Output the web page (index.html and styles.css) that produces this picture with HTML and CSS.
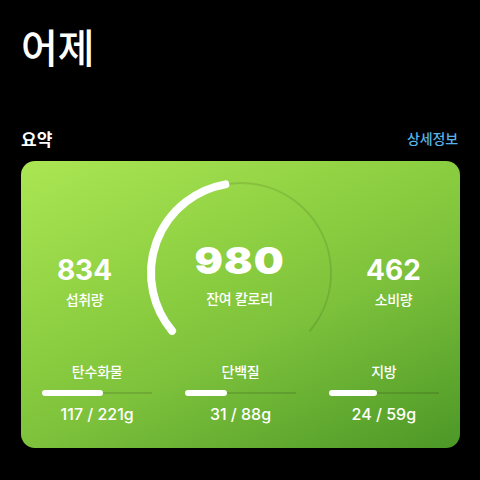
FILE: index.html
```html
<!DOCTYPE html>
<html lang="ko">
<head>
<meta charset="utf-8">
<title>어제</title>
<link rel="stylesheet" href="styles.css">
</head>
<body>
<main class="page">
  <h1 class="title">어제</h1>
  <div class="section-head">
    <span class="section-title">요약</span>
    <a class="more" href="#">상세정보</a>
  </div>
  <section class="card">
    <div class="top">
      <div class="stat">
        <div class="num">834</div>
        <div class="lbl">섭취량</div>
      </div>
      <div class="gauge">
        <svg class="ring" width="200" height="170" viewBox="0 0 200 170">
          <path d="M31.06 157.85 A90 90 0 1 1 168.94 157.85" fill="none" stroke="rgba(0,0,0,0.10)" stroke-width="2" stroke-linecap="round"/>
          <path d="M31.06 157.85 A90 90 0 0 1 84.37 11.37" fill="none" stroke="#ffffff" stroke-width="8" stroke-linecap="round"/>
        </svg>
        <div class="center">
          <div class="big">980</div>
          <div class="lbl lbl-center">잔여 칼로리</div>
        </div>
      </div>
      <div class="stat">
        <div class="num">462</div>
        <div class="lbl">소비량</div>
      </div>
    </div>
    <div class="macros">
      <div class="macro">
        <div class="mlbl">탄수화물</div>
        <div class="bar"><div class="fill" style="width:55%"></div></div>
        <div class="mval">117 / 221g</div>
      </div>
      <div class="macro">
        <div class="mlbl">단백질</div>
        <div class="bar"><div class="fill" style="width:38%"></div></div>
        <div class="mval">31 / 88g</div>
      </div>
      <div class="macro">
        <div class="mlbl">지방</div>
        <div class="bar"><div class="fill" style="width:44%"></div></div>
        <div class="mval">24 / 59g</div>
      </div>
    </div>
  </section>
</main>
</body>
</html>
```
FILE: styles.css
```css
* { box-sizing: border-box; }
html, body {
  margin: 0;
  background: #000;
}
body {
  font-family: Inter, "Noto Sans CJK KR", sans-serif;
  color: #fff;
  width: 480px;
  height: 480px;
  overflow: hidden;
}
.page {
  padding: 22px 20px 0 21px;
}
.title {
  margin: 0;
  font-family: "Noto Sans CJK KR", sans-serif;
  font-size: 40px;
  line-height: 48px;
  font-weight: 500;
}
.section-head {
  margin-top: 56px;
  display: flex;
  justify-content: space-between;
  align-items: center;
  height: 24px;
}
.section-title {
  font-family: "Noto Sans CJK KR", sans-serif;
  font-size: 17px;
  font-weight: 700;
}
.more {
  font-family: "Noto Sans CJK KR", sans-serif;
  font-size: 14px;
  letter-spacing: -0.1px;
  margin-right: 2px;
  color: #58b2e8;
  text-decoration: none;
  font-weight: 500;
}
.card {
  margin-top: 11px;
  width: 439px;
  height: 287px;
  border-radius: 14px;
  background: linear-gradient(155deg, #abe653 0%, #8acd40 42%, #7ec23c 58%, #4c9827 100%);
  padding-top: 12px;
}
.top {
  display: grid;
  grid-template-columns: 113px 200px 1fr;
  padding: 0 14px 0 7px;
  height: 170px;
}
.stat {
  text-align: center;
  padding-top: 80px;
}
.num {
  font-size: 28px;
  line-height: 34px;
  font-weight: 700;
}
.lbl {
  font-family: "Noto Sans CJK KR", sans-serif;
  font-size: 14px;
  letter-spacing: -0.3px;
  line-height: 20px;
  margin-top: 1.5px;
  font-weight: 500;
}
.lbl-center {
  margin-top: 5.5px;
}
.gauge {
  position: relative;
  height: 170px;
}
.ring {
  display: block;
}
.center {
  position: absolute;
  top: 65.5px;
  left: 0;
  right: 3px;
  text-align: center;
}
.big {
  display: inline-block;
  font-size: 37px;
  line-height: 44px;
  font-weight: 900;
  letter-spacing: 1px;
  transform: scaleX(1.14);
}
.macros {
  display: grid;
  grid-template-columns: repeat(3, 1fr);
  column-gap: 33px;
  padding: 18px 21px 0;
}
.macro {
  text-align: center;
}
.mlbl {
  font-family: "Noto Sans CJK KR", sans-serif;
  font-size: 14px;
  letter-spacing: -0.2px;
  line-height: 20px;
  font-weight: 500;
}
.bar {
  margin-top: 9px;
  height: 6px;
  background: linear-gradient(to bottom, transparent 2px, rgba(0,0,0,0.12) 2px, rgba(0,0,0,0.12) 4px, transparent 4px);
  border-radius: 3px;
}
.fill {
  height: 6px;
  background: #fff;
  border-radius: 3px;
}
.mval {
  margin-top: 8px;
  font-size: 16px;
  line-height: 20px;
  font-weight: 500;
}
```
